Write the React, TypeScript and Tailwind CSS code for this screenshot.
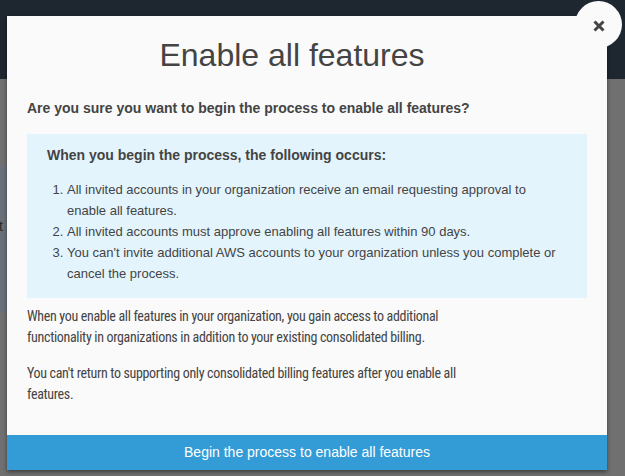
import React from "react";

export default function App() {
  return (
    <div
      className="relative w-[625px] h-[476px] overflow-hidden bg-[#707070]"
      style={{ fontFamily: '"Liberation Sans", Arial, sans-serif' }}
    >
      {/* background page */}
      <div className="h-[79px] bg-[#1e2630]" />
      <div className="flex flex-col">
        <div className="h-[87px]" />
        <div className="h-[147px] w-[40px] bg-[#6a7079] pt-[50px] text-[14px] text-[#2a2a2a] overflow-hidden">
          <span className="ml-[-8px]">st</span>
        </div>
      </div>

      {/* modal */}
      <div className="absolute left-[7px] top-[16px] w-[600px] h-[454px] bg-[#fafafa] shadow-[0_2px_4px_rgba(0,0,0,0.45)] flex flex-col">
        <div className="flex-1 px-[20px]">
          <h1 className="text-center text-[32px] leading-[36px] text-[#444] pt-[21px] pr-[30px]">
            Enable all features
          </h1>
          <p className="mt-[25px] text-[14px] leading-[20px] font-bold text-[#444]">
            Are you sure you want to begin the process to enable all features?
          </p>
          <div className="mt-[16px] bg-[#e3f4fd] pl-[20px] pr-[20px] pt-[11px] pb-[14px] text-[#444]">
            <p className="text-[14px] leading-[20px] font-bold">
              When you begin the process, the following occurs:
            </p>
            <ol className="mt-[14px] text-[13px] leading-[21px] list-decimal pl-[20px]">
              <li>
                All invited accounts in your organization receive an email requesting approval to enable all features.
              </li>
              <li>All invited accounts must approve enabling all features within 90 days.</li>
              <li>
                You can't invite additional AWS accounts to your organization unless you complete or cancel the process.
              </li>
            </ol>
          </div>
          <div
            className="w-[462px] text-[14px] leading-[21px] text-[#444] tracking-[-0.33px]"
            style={{ fontFamily: '"Liberation Sans Narrow", "Arial Narrow", "Roboto Condensed", Roboto, sans-serif' }}
          >
            <p className="mt-[8px]">
              When you enable all features in your organization, you gain access to additional functionality in organizations in addition to your existing consolidated billing.
            </p>
            <p className="mt-[15px]">
              You can't return to supporting only consolidated billing features after you enable all features.
            </p>
          </div>
        </div>
        <button className="h-[35px] w-full bg-[#339bd6] text-white text-[14px] flex items-center justify-center">
          Begin the process to enable all features
        </button>
      </div>

      {/* close button */}
      <div className="absolute left-[575px] top-[1px] w-[47px] h-[47px] rounded-full bg-[#fafafa] flex items-center justify-center">
        <svg width="12" height="12" viewBox="0 0 12 12" className="mt-[2px]">
          <path d="M1.5 1.5 L10.5 10.5 M10.5 1.5 L1.5 10.5" stroke="#444" strokeWidth="3" />
        </svg>
      </div>
    </div>
  );
}
